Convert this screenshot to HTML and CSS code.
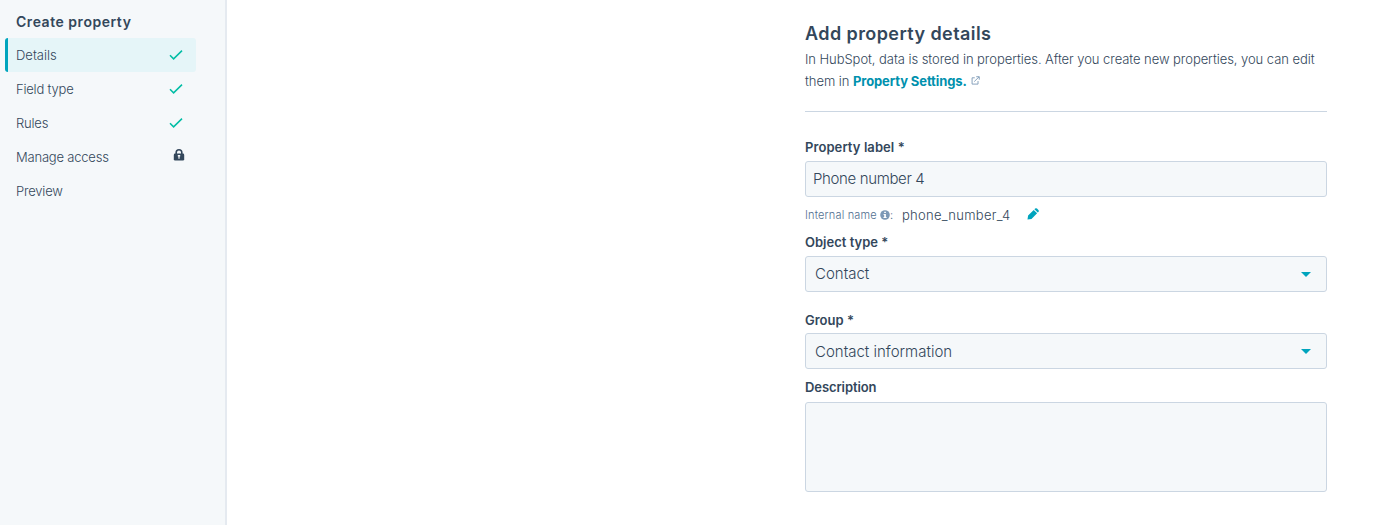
FILE: index.html
```html
<!doctype html>

<html lang="en">
<head>
	<title>Create property</title>
	<meta charset="utf-8">
	<link rel="stylesheet" href="styles.css">
</head>

<body>
	<div class="page">
		<nav class="sidebar">
			<h1>Create property</h1>
			<a href="#" class="step details active">
				<span>Details</span>
				<svg class="check" viewBox="0 0 14 12"><path d="M1 6.3l3.6 3.6L13 1.6"/></svg>
			</a>
			<a href="#" class="step">
				<span>Field type</span>
				<svg class="check" viewBox="0 0 14 12"><path d="M1 6.3l3.6 3.6L13 1.6"/></svg>
			</a>
			<a href="#" class="step">
				<span>Rules</span>
				<svg class="check" viewBox="0 0 14 12"><path d="M1 6.3l3.6 3.6L13 1.6"/></svg>
			</a>
			<a href="#" class="step">
				<span>Manage access</span>
				<svg class="lock" viewBox="0 0 12 12">
					<path class="shackle" d="M3.2 5.5V3.6a2.8 2.8 0 0 1 5.6 0v1.9"/>
					<rect x="0.8" y="4.6" width="10.4" height="7" rx="1.3"/>
					<path class="keyhole" d="M4.8 6h2.4v1.4H6.6v2.4H5.4V7.4H4.8z"/>
				</svg>
			</a>
			<a href="#" class="step">
				<span>Preview</span>
			</a>
		</nav>

		<main class="content">
			<h2>Add property details</h2>
			<p class="intro">
				In HubSpot, data is stored in properties. After you create new properties, you can edit<br>
				them in <a href="#" class="link">Property Settings.</a>
				<svg class="external" viewBox="0 0 10 10"><path d="M4.2 2H1.2v7h6.6V5.6M3.6 6.2L9 .9M5.8.8h3.4v3.3"/></svg>
			</p>
			<hr>

			<label class="label l-property" for="label">Property label *</label>
			<input class="field" id="label" type="text" value="Phone number 4">

			<div class="internal">
				<span class="internal-name">Internal name</span>
				<svg class="info" viewBox="0 0 10 10">
					<circle cx="5" cy="5" r="4.8"/>
					<path d="M4.2 1.7h1.7v1.4H4.2zM3.6 4h2.3v3.1h.7v1H3.5v-1h.7V5h-.6z"/>
				</svg>
				<span class="colon">:</span>
				<span class="internal-value">phone_number_4</span>
				<svg class="pencil" viewBox="0 0 12 12">
					<path d="M.5 11.5l.6-4L6.7 1.9l3.4 3.4-5.6 5.6zM7.4 1.2l.7-.6a1.4 1.4 0 0 1 1.9 0l1.4 1.4a1.4 1.4 0 0 1 0 1.9l-.6.7z"/>
				</svg>
			</div>

			<div class="label">Object type *</div>
			<div class="field select first">
				<span>Contact</span>
				<span class="caret"></span>
			</div>

			<div class="label">Group *</div>
			<div class="field select">
				<span>Contact information</span>
				<span class="caret"></span>
			</div>

			<label class="label l-description" for="description">Description</label>
			<textarea class="field area" id="description"></textarea>
		</main>
	</div>
</body>
</html>
```

FILE: styles.css
```css
* { box-sizing: border-box }
html, body { margin: 0px; padding: 0px }
body {
	font-family: Inter, "Open Sans", sans-serif;
	font-size: 13px;
	font-weight: 300;
	color: #33475b;
	background-color: #fff;
}
.page {
	display: flex;
	height: 525px;
	overflow: hidden;
}

/* left navigation */
.sidebar {
	width: 227px;
	padding: 12px 29px 0px 5px;
	background-color: #f5f8fa;
	border-right: 2px solid #e5eaf0;
}
h1 {
	margin: 0px 0px 6px;
	padding-left: 11px;
	font-size: 14px;
	line-height: 20px;
	font-weight: 600;
	letter-spacing: 0.53px;
}
.step {
	display: flex;
	align-items: center;
	justify-content: space-between;
	height: 34px;
	padding: 0px 13px 0px 8px;
	border-left: 3px solid transparent;
	border-radius: 3px;
	color: #33475b;
	letter-spacing: -0.2px;
	text-decoration: none;
}
.details { letter-spacing: 0px }
.active {
	background-color: #e5f5f8;
	border-left-color: #00a4bd;
}
.check {
	width: 14px;
	height: 12px;
	fill: none;
	stroke: #00bda5;
	stroke-width: 1.5;
}
.lock {
	width: 12px;
	height: 12px;
	margin: 0px -2px 4px 0px;
	fill: #33475b;
}
.shackle { fill: none; stroke: #33475b; stroke-width: 1.6 }
.keyhole { fill: #f5f8fa }

/* form */
.content {
	display: flex;
	flex-direction: column;
	width: 522px;
	margin-left: 578px;
	padding-top: 22px;
}
h2 {
	margin: 0px 0px 2px;
	font-size: 18px;
	line-height: 24px;
	font-weight: 600;
	letter-spacing: 0.42px;
}
.intro {
	margin: 0px;
	line-height: 22px;
	letter-spacing: -0.06px;
	white-space: nowrap;
}
.link {
	color: #0091ae;
	font-weight: 700;
	letter-spacing: -0.1px;
	text-decoration: none;
}
.external {
	width: 9px;
	height: 9px;
	margin-left: 1px;
	vertical-align: 1px;
	fill: none;
	stroke: #7c98b6;
	stroke-width: 1;
}
hr {
	width: 100%;
	margin: 19px 0px 25px;
	border: 0px;
	border-top: 1px solid #cbd6e2;
}
.label {
	height: 20px;
	line-height: 20px;
	font-size: 13px;
	font-weight: 600;
}
.l-property { letter-spacing: 0.08px }
.field {
	width: 522px;
	height: 36px;
	padding: 0px 7px;
	font-family: inherit;
	font-size: 15px;
	font-weight: 300;
	color: #33475b;
	background-color: #f5f8fa;
	border: 1px solid #cbd6e2;
	border-radius: 3px;
	outline: none;
}
#label {
	margin-top: 4px;
	padding-bottom: 2px;
	letter-spacing: -0.36px;
}
.internal {
	display: flex;
	align-items: center;
	height: 22px;
	margin: 7px 0px 6px;
}
.internal-name, .colon { font-size: 11px; color: #516f90 }
.internal-name { letter-spacing: 0.17px }
.info {
	width: 10px;
	height: 10px;
	margin-left: 3px;
	fill: #7c98b6;
}
.info path { fill: #fff }
.internal-value { margin-left: 9px; letter-spacing: 0.28px }
.pencil {
	width: 12px;
	height: 12px;
	margin: 0px 0px 3px 17px;
	fill: #00a4bd;
}
.select {
	display: flex;
	align-items: center;
	justify-content: space-between;
	margin-top: 3px;
	padding: 0px 15px 0px 9px;
}
.first { margin: 4px 0px 18px; padding-bottom: 1px }
.caret {
	margin-top: 1px;
	border: 5px solid transparent;
	border-top-color: #00a4bd;
	border-bottom-width: 0px;
}
.l-description { margin-top: 8px; letter-spacing: -0.1px }
.area {
	height: 90px;
	margin-top: 5px;
	resize: none;
}
```
